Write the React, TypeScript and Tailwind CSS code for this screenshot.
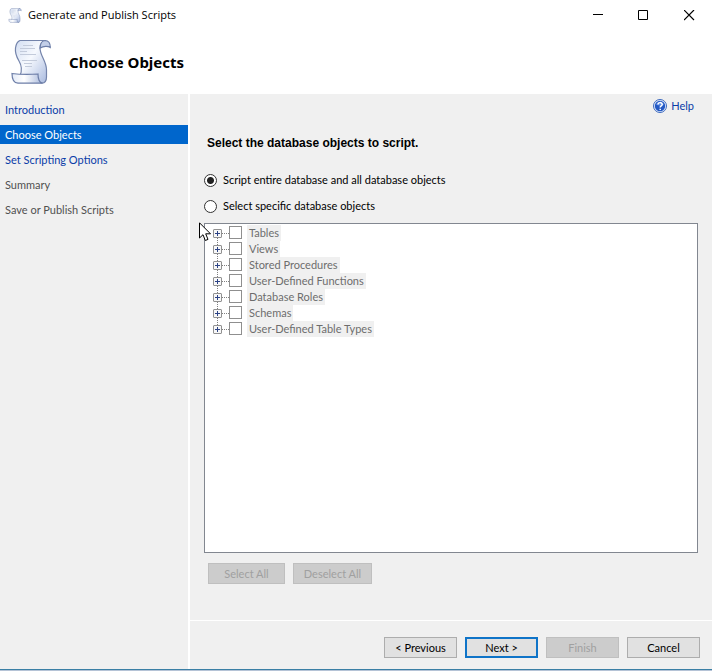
import { useState } from "react";

const steps = [
  { label: "Introduction", state: "link" },
  { label: "Choose Objects", state: "current" },
  { label: "Set Scripting Options", state: "link" },
  { label: "Summary", state: "pending" },
  { label: "Save or Publish Scripts", state: "pending" },
];

const stepStyles: Record<string, string> = {
  link: "text-[#0a3ca8]",
  current: "bg-[#0066cc] text-white",
  pending: "text-[#505050]",
};

const objectTypes = [
  "Tables",
  "Views",
  "Stored Procedures",
  "User-Defined Functions",
  "Database Roles",
  "Schemas",
  "User-Defined Table Types",
];

function ScriptIcon({ className }: { className: string }) {
  return (
    <svg viewBox="0 0 40 46" className={className} aria-hidden="true">
      <defs>
        <linearGradient id="paper" x1="0" y1="0" x2="1" y2="1">
          <stop offset="0" stopColor="#d3def2" />
          <stop offset="0.45" stopColor="#f6f9fe" />
          <stop offset="1" stopColor="#a9badf" />
        </linearGradient>
        <linearGradient id="roll" x1="0" y1="0" x2="1" y2="0">
          <stop offset="0" stopColor="#e3eaf7" />
          <stop offset="0.4" stopColor="#ffffff" />
          <stop offset="1" stopColor="#a9b9dc" />
        </linearGradient>
      </defs>
      <path
        d="M9 1.500H35C31 2 29 5 29 9C29 17 35.500 22 35.500 31V38C35.500 41.500 34 44 31 44.200L9 37C11.500 31 11 27 8 22C5 17 4 13 4.500 9C5 5 6.500 2.500 9 1.500Z"
        fill="url(#paper)"
        stroke="#7484ab"
        strokeWidth="1.200"
      />
      <path d="M34 1.500C37.500 1.500 39.300 4 39.300 8.500C37 7 32.500 7 29.200 9C29.200 5 31 1.700 34 1.500Z" fill="#c3cfe8" stroke="#6d7ea8" strokeWidth="1.200" />
      <path d="M1 34.500C9 35.500 19 35.500 27 35C27 39.500 28 43.500 31.500 44.200H7C3 44 1 40 1 34.500Z" fill="url(#roll)" stroke="#6d7ea8" strokeWidth="1.200" />
      <path d="M12 6.500H22M9 9.500H24M9 12.500H16M9 15.500H25M11 21.500H26M13 24.500H21M14 27.500H21" stroke="#c3cbdb" strokeWidth="1" />
    </svg>
  );
}

function HelpIcon() {
  return (
    <svg viewBox="0 0 14 14" className="size-[14px]" aria-hidden="true">
      <circle cx="7" cy="7" r="6.500" fill="#e4edfb" stroke="#3c68bd" />
      <circle cx="7" cy="7" r="5.200" fill="#2459c4" />
      <path d="M3 5.500A4.300 4.300 0 0 1 11 5.500C9 7 5 7 3 5.500Z" fill="#5b8ae2" />
      <path d="M5 5.600C5 3 9.200 3 9.200 5.400C9.200 6.900 7.200 6.900 7.200 8.500M7.200 9.700V11" fill="none" stroke="#fff" strokeWidth="1.500" />
    </svg>
  );
}

function PushButton({ label, className, disabled, primary }: { label: string; className: string; disabled?: boolean; primary?: boolean }) {
  const look = disabled
    ? "border border-[#bfbfbf] bg-[#cccccc] text-[#a0a0a0]"
    : primary
      ? "border-2 border-[#0f74c8] bg-[#e1e1e1] text-black"
      : "border border-[#adadad] bg-[#e1e1e1] text-black";
  return (
    <button type="button" disabled={disabled} className={`flex h-[21px] items-center justify-center whitespace-nowrap ${look} ${className}`}>
      {label}
    </button>
  );
}

function TreeLine({ hidden }: { hidden: boolean }) {
  return (
    <span
      className={`w-px flex-1 ${hidden ? "" : "bg-[repeating-linear-gradient(to_bottom,#808080_0,#808080_1px,transparent_1px,transparent_2px)]"}`}
    />
  );
}

export default function App() {
  const [scope, setScope] = useState("all");
  const radio =
    "size-[13px] shrink-0 appearance-none rounded-full border border-[#333] bg-white bg-clip-padding checked:bg-[radial-gradient(circle,#222_3px,#fff_4px)]";

  return (
    <div className="relative flex min-h-screen flex-col bg-[#f0f0f0] font-[Lato,'Liberation_Sans',sans-serif] text-[11px] leading-4 text-black">
      <header className="bg-white">
        <div className="flex h-[30px] items-center pl-2">
          <ScriptIcon className="h-[15px] w-[14px]" />
          <h1 className="ml-[6px] flex-1 font-['Open_Sans','Noto_Sans',sans-serif] text-[11px]">Generate and Publish Scripts</h1>
          <div className="flex h-full">
            <button type="button" aria-label="Minimize" className="flex w-[45px] items-center justify-center">
              <svg viewBox="0 0 11 11" className="size-[11px]"><path d="M0 4.500H10" stroke="#000" /></svg>
            </button>
            <button type="button" aria-label="Maximize" className="flex w-[45px] items-center justify-center">
              <svg viewBox="0 0 11 11" className="size-[11px]"><path d="M.5 .5H9.500V9.500H.5Z" fill="none" stroke="#000" /></svg>
            </button>
            <button type="button" aria-label="Close" className="flex w-[46px] items-center justify-center">
              <svg viewBox="0 0 11 11" className="size-[11px]"><path d="M0 0L10 10M10 0L0 10" stroke="#000" strokeWidth="1.200" /></svg>
            </button>
          </div>
        </div>
        <div className="flex h-16 items-center gap-[18px] pl-[11px]">
          <ScriptIcon className="h-[46px] w-10" />
          <h2 className="font-['Noto_Sans','Open_Sans',sans-serif] text-[15px] font-bold">Choose Objects</h2>
        </div>
      </header>

      <div className="flex flex-1">
        <nav className="flex w-[190px] shrink-0 flex-col gap-[6px] border-r-2 border-white pt-[6px]">
          {steps.map((s) => (
            <a key={s.label} href="#" aria-current={s.state === "current" ? "step" : undefined} className={`block h-[19px] pl-[5px] leading-5 ${stepStyles[s.state]}`}>
              {s.label}
            </a>
          ))}
        </nav>

        <div className="flex min-w-0 flex-1 flex-col">
          <main className="flex flex-1 flex-col pr-[14px] pb-9 pl-[14px]">
            <a href="#" className="mt-1 mr-1 flex items-center gap-1 self-end text-[#0a3ca8]">
              <HelpIcon />
              Help
            </a>
            <h3 className="mt-[21px] ml-[3px] font-['Liberation_Sans',Arial,sans-serif] text-[12px] font-bold">Select the database objects to script.</h3>
            <div className="mt-[21px] flex flex-col gap-[10px]">
              <label className="flex items-center gap-[6px]">
                <input type="radio" name="scope" className={radio} checked={scope === "all"} onChange={() => setScope("all")} />
                Script entire database and all database objects
              </label>
              <label className="flex items-center gap-[6px]">
                <input type="radio" name="scope" className={radio} checked={scope === "some"} onChange={() => setScope("some")} />
                Select specific database objects
              </label>
            </div>

            <ul className="mt-[9px] flex-1 border border-[#828790] bg-white pt-px pl-2">
              {objectTypes.map((name, i) => (
                <li key={name} className="flex h-4 items-center">
                  <div className="flex w-[9px] flex-col items-center self-stretch pt-px">
                    <TreeLine hidden={i === 0} />
                    <button type="button" disabled aria-label={`Expand ${name}`} className="block size-[9px]">
                      <svg viewBox="0 0 9 9" className="block size-[9px]">
                        <rect x=".5" y=".5" width="8" height="8" rx=".5" fill="#f8f8f8" stroke="#919191" />
                        <path d="M2 4.500H7M4.500 2V7" stroke="#2c4386" />
                      </svg>
                    </button>
                    <TreeLine hidden={i === objectTypes.length - 1} />
                  </div>
                  <span className="w-[7px] border-t border-dotted border-[#808080]" />
                  <input id={`type-${i}`} type="checkbox" disabled className="mt-px size-[13px] appearance-none self-start border border-[#8f8f8f] bg-white" />
                  <label htmlFor={`type-${i}`} className="ml-[5px] bg-[#f0f0f0] px-[2px] text-[#6d6d6d]">
                    {name}
                  </label>
                </li>
              ))}
            </ul>

            <div className="mt-[10px] ml-1 flex gap-2">
              <PushButton label="Select All" disabled className="w-[77px]" />
              <PushButton label="Deselect All" disabled className="w-[79px]" />
            </div>
          </main>

          <footer className="flex justify-end gap-2 border-t border-white pt-4 pr-3 pb-[11px]">
            <PushButton label="< Previous" className="w-[73px]" />
            <PushButton label="Next >" primary className="w-[73px]" />
            <PushButton label="Finish" disabled className="w-[73px]" />
            <PushButton label="Cancel" className="w-[73px]" />
          </footer>
        </div>
      </div>
      <div className="h-[2px] border-t border-[#3a7fa5] bg-[#b5c3d6]" />

      <svg viewBox="0 0 13 20" className="pointer-events-none absolute top-[222px] left-[199px] h-5 w-[13px]" aria-hidden="true">
        <path d="M.5 .8V16L4 12.700L6.300 18.500L9 17.400L6.700 11.800H11.500Z" fill="#fff" stroke="#000" />
      </svg>
    </div>
  );
}
